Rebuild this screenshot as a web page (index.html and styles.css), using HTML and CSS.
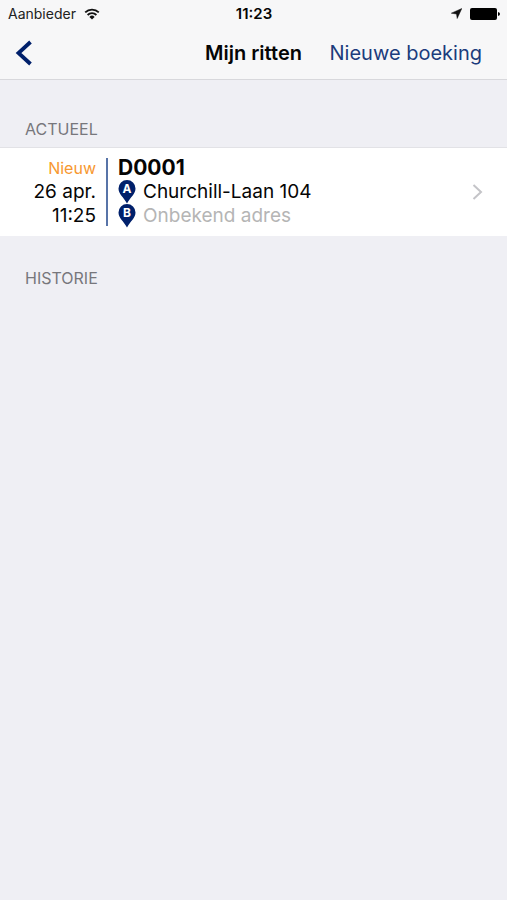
FILE: index.html
```html
<!DOCTYPE html>
<html lang="nl">
<head>
<meta charset="utf-8">
<meta name="viewport" content="width=device-width, initial-scale=1">
<title>Mijn ritten</title>
<link rel="stylesheet" href="styles.css">
</head>
<body>
<header class="top">
  <div class="status">
    <div class="carrier">
      <span>Aanbieder</span>
      <svg class="wifi" viewBox="0 0 16 12" aria-hidden="true">
        <path d="M1.200 4.400a9.600 9.600 0 0 1 13.600 0M3.600 7a6.200 6.200 0 0 1 8.800 0" fill="none" stroke="#111" stroke-width="1.800"/>
        <path d="M8 11.600 5.400 8.900a3.700 3.700 0 0 1 5.200 0Z" fill="#111"/>
      </svg>
    </div>
    <time class="clock">11:23</time>
    <div class="indicators">
      <svg class="location" viewBox="0 0 11 11" aria-hidden="true"><path d="M10.800.5 6.200 10.500 5.500 6 .3 5.200Z" fill="#111" stroke="#111" stroke-width=".5"/></svg>
      <svg class="battery" viewBox="0 0 30 12" aria-hidden="true">
        <rect width="27" height="12" rx="2"/>
        <path d="M28 4q2 .5 2 2t-2 2Z"/>
      </svg>
    </div>
  </div>
  <nav class="navbar">
    <button class="back" type="button" aria-label="Terug">
      <svg viewBox="0 0 18 26" aria-hidden="true"><path d="M15.500 2 3.500 13l12 11" fill="none" stroke="#00206b" stroke-width="3.800"/></svg>
    </button>
    <h1>Mijn ritten</h1>
    <a class="new" href="#">Nieuwe boeking</a>
  </nav>
</header>
<main>
  <section>
    <h2>ACTUEEL</h2>
    <a class="ride" href="#">
      <div class="when">
        <span class="state">Nieuw</span>
        <span>26 apr.</span>
        <span>11:25</span>
      </div>
      <div class="divider"></div>
      <div class="details">
        <strong>D0001</strong>
        <div class="stop">
          <svg class="pin" viewBox="0 0 18 24" aria-hidden="true"><path d="M9 0a8.500 8.500 0 0 1 8.500 8.500C17.500 14 12.500 17 9 23.500 5.500 17 .5 14 .5 8.500A8.500 8.500 0 0 1 9 0Z" fill="#00206b"/><text x="9" y="13">A</text></svg>
          <span>Churchill-Laan 104</span>
        </div>
        <div class="stop unknown">
          <svg class="pin" viewBox="0 0 18 24" aria-hidden="true"><path d="M9 0a8.500 8.500 0 0 1 8.500 8.500C17.500 14 12.500 17 9 23.500 5.500 17 .5 14 .5 8.500A8.500 8.500 0 0 1 9 0Z" fill="#00206b"/><text x="9" y="13">B</text></svg>
          <span>Onbekend adres</span>
        </div>
      </div>
      <svg class="chevron" viewBox="0 0 11 16" aria-hidden="true"><path d="m1.500 1 7.500 7-7.500 7" fill="none" stroke="#c4c4c8" stroke-width="2"/></svg>
    </a>
  </section>
  <section>
    <h2>HISTORIE</h2>
  </section>
</main>
</body>
</html>
```
FILE: styles.css
```css
* {
  box-sizing: border-box;
}

body {
  margin: 0;
  min-height: 100vh;
  background: #efeff4;
  color: #050505;
  font-family: Inter, "Liberation Sans", sans-serif;
}

a {
  color: inherit;
  text-decoration: none;
}

svg {
  display: block;
  flex: none;
}

.top {
  background: #f7f7f8;
  border-bottom: 1px solid #d8d8dc;
}

.status,
.navbar {
  display: grid;
  grid-template-columns: 1fr auto 1fr;
  align-items: center;
}

.status {
  height: 27px;
  padding: 0 7px 0 8px;
  font-size: 14px;
}

.carrier,
.indicators {
  display: flex;
  align-items: center;
  gap: 8px;
}

.carrier {
  color: #222;
}

.indicators {
  justify-content: flex-end;
}

.wifi {
  width: 16px;
  height: 12px;
}

.clock {
  font-size: 15px;
  font-weight: 600;
}

.location {
  width: 11px;
  height: 11px;
}

.battery {
  width: 30px;
  height: 12px;
}

.navbar {
  height: 52px;
  padding: 0 15px;
  font-size: 20px;
}

.back {
  justify-self: start;
  padding: 0;
  border: 0;
  background: none;
}

.back svg {
  width: 18px;
  height: 26px;
}

h1 {
  margin: 0;
  font-size: 20px;
  font-weight: 600;
}

.new {
  justify-self: end;
  padding-right: 10px;
  color: #1c3c7c;
}

main {
  padding-top: 7px;
}

h2 {
  margin: 0;
  padding: 32px 25px 8px;
  color: #77777c;
  font-size: 16px;
  font-weight: 400;
  line-height: 20px;
}

.ride {
  display: flex;
  align-items: center;
  padding: 8px 24px 8px 0;
  border-top: 1px solid #e2e2e6;
  background: #fff;
  font-size: 19px;
  line-height: 24px;
}

.when {
  display: flex;
  flex-direction: column;
  width: 106px;
  padding-right: 10px;
  text-align: right;
}

.state {
  color: #f7982f;
  font-size: 16px;
}

.divider {
  width: 2px;
  height: 68px;
  background: #5874a8;
}

.details {
  flex: 1;
  padding-left: 10px;
}

strong {
  display: block;
  font-size: 21px;
  font-weight: 700;
}

.stop {
  display: flex;
  align-items: center;
  gap: 7px;
}

.unknown {
  color: #b5b5b5;
}

.pin {
  width: 18px;
  height: 24px;
}

.pin text {
  fill: #fff;
  font-size: 12px;
  font-weight: 700;
  text-anchor: middle;
}

.chevron {
  width: 11px;
  height: 16px;
}
```
